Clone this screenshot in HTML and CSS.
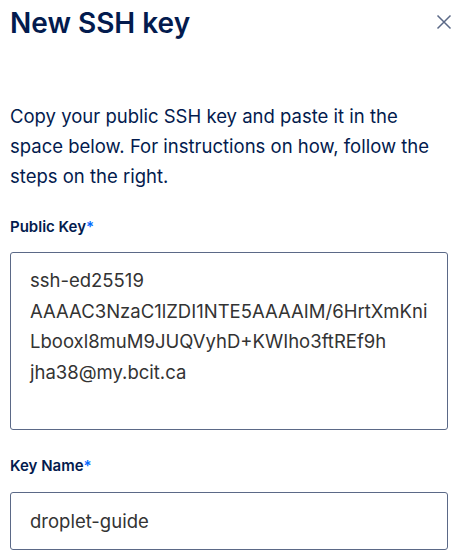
FILE: index.html
```html
<!DOCTYPE html>
<html>
<head>
<meta charset="utf-8">
<link rel="stylesheet" href="styles.css">
</head>
<body>
<div class="modal">
  <header class="head">
    <h1 class="title">New SSH key</h1>
    <button class="close" aria-label="Close">
      <svg width="16" height="16" viewBox="0 0 16 16"><path d="M1.5 1.5 L14.5 14.5 M14.5 1.5 L1.5 14.5" stroke="#5b6987" stroke-width="1.5" fill="none"/></svg>
    </button>
  </header>
  <p class="intro">Copy your public SSH key and paste it in the space below. For instructions on how, follow the steps on the right.</p>
  <label class="label">Public Key<span class="req">*</span></label>
  <div class="field area">ssh-ed25519<br>AAAAC3NzaC1lZDI1NTE5AAAAIM/6HrtXmKni<br>Lbooxl8muM9JUQVyhD+KWIho3ftREf9h<br>jha38@my.bcit.ca</div>
  <label class="label label2">Key Name<span class="req">*</span></label>
  <div class="field input">droplet-guide</div>
</div>
</body>
</html>
```
FILE: styles.css
```css
html, body { margin: 0; padding: 0; background: #fff; }
body { font-family: Inter, "Noto Sans", sans-serif; }
.modal { padding: 0 10px 0 10px; }
.head { display: flex; justify-content: space-between; align-items: flex-start; padding-top: 5px; }
.title { margin: 0; font-size: 28px; line-height: 36px; font-weight: 600; color: #031b4e; }
.close { border: 0; background: none; padding: 0; margin: 9px 0 0 0; width: 16px; height: 16px; display: block; }
.close svg { display: block; }
.intro { margin: 60px 0 0; font-size: 18.5px; line-height: 30px; color: #031b4e; width: 420px; }
.label { display: block; margin-top: 26px; font-size: 15px; line-height: 20px; font-weight: 600; color: #031b4e; }
.req { color: #0069ff; }
.field { box-sizing: border-box; border: 1px solid #5b6987; border-radius: 3px; font-size: 18.5px; color: #333; width: 438px; }
.area { margin-top: 15px; height: 178px; padding: 12px 19px; line-height: 30.6px; }
.label2 { margin-top: 26px; }
.input { margin-top: 16px; height: 58px; padding: 0 19px; line-height: 56px; }
```
